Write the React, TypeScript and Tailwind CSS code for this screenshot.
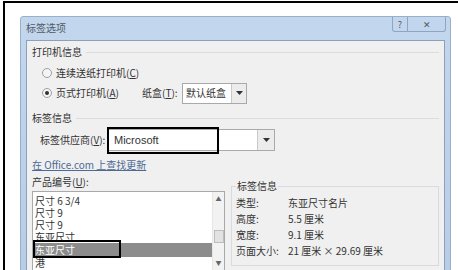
import React from "react";

const font = { fontFamily: '"Noto Sans CJK SC", "Liberation Sans", sans-serif' };

function Arrow() {
  return (
    <svg width="7" height="4" viewBox="0 0 7 4">
      <path d="M0 0h7L3.5 4z" fill="#333" />
    </svg>
  );
}

function Radio({ on }: { on?: boolean }) {
  return (
    <span className="w-[10px] h-[10px] rounded-full border border-[#a0a0a0] bg-[#f4f4f4] flex items-center justify-center">
      {on && <span className="w-[4px] h-[4px] rounded-full bg-[#333]" />}
    </span>
  );
}

function GroupHead({ children }: { children: React.ReactNode }) {
  return (
    <div className="flex items-center gap-1 h-[16px]">
      <span>{children}</span>
      <span className="flex-1 h-px bg-[#dcdcdc]" />
    </div>
  );
}

export default function App() {
  const items = ["尺寸 6 3/4", "尺寸 9", "尺寸 9", "东亚尺寸"];
  const info = [
    ["类型:", "东亚尺寸名片"],
    ["高度:", "5.5 厘米"],
    ["宽度:", "9.1 厘米"],
    ["页面大小:", "21 厘米 × 29.69 厘米"],
  ];
  return (
    <div className="w-[458px] h-[270px] overflow-hidden bg-white pt-[1px]" style={font}>
      <div className="ml-[3px] h-[280px] border-t-2 border-l-2 border-black pl-[15px] pt-[13px]">
        <div className="w-[431px] h-[270px] bg-gradient-to-b from-[#c2d7ee] to-[#b6cde6] border border-[#9aafc8] rounded-t-[3px] flex flex-col text-[10px] text-[#333] leading-none">
          <div className="h-[23px] flex items-start">
            <span className="ml-[5px] mt-[6px] text-[#505a66]">标签选项</span>
            <div className="ml-auto mr-[4px] flex">
              <div className="w-[16px] h-[15px] border border-t-0 border-[#8ea6c4] rounded-bl-[3px] flex items-center justify-center text-[9px] text-[#555]">?</div>
              <div className="w-[38px] h-[15px] border border-t-0 border-l-0 border-[#8ea6c4] rounded-br-[3px] flex items-center justify-center text-[9px] text-[#555]">✕</div>
            </div>
          </div>
          <div className="mx-[5px] flex-1 bg-[#f0f0f0] border border-[#8da0b8] px-[5px] pt-[3px] flex flex-col">
            <GroupHead>打印机信息</GroupHead>
            <div className="flex items-center gap-[4px] ml-[10px] mt-[5px] h-[16px]">
              <Radio />
              <span>连续送纸打印机(<u>C</u>)</span>
            </div>
            <div className="flex items-center ml-[10px] mt-[1px] h-[22px]">
              <Radio on />
              <span className="ml-[4px] w-[86px]">页式打印机(<u>A</u>)</span>
              <span className="w-[40px]">纸盒(<u>T</u>):</span>
              <div className="w-[65px] h-[21px] bg-white border border-[#a9a9a9] flex items-center">
                <span className="ml-[3px] flex-1">默认纸盒</span>
                <span className="w-[15px] h-full border-l border-[#c8c8c8] bg-[#ececec] flex items-center justify-center">
                  <Arrow />
                </span>
              </div>
            </div>
            <div className="mt-[6px]">
              <GroupHead>标签信息</GroupHead>
            </div>
            <div className="flex items-center ml-[8px] mt-[2px] h-[24px]">
              <span className="w-[68px]">标签供应商(<u>V</u>):</span>
              <div className="w-[167px] h-[22px] bg-white border border-[#a9a9a9] flex items-center relative">
                <span className="ml-[5px] flex-1 text-[11px]" style={{ fontFamily: '"Liberation Sans", sans-serif' }}>Microsoft</span>
                <span className="w-[17px] h-full border-l border-[#c8c8c8] bg-[#ececec] flex items-center justify-center">
                  <Arrow />
                </span>
                <div className="absolute left-[-2px] top-[-3px] w-[112px] h-[27px] border-2 border-black" />
              </div>
            </div>
            <div className="mt-[6px] h-[14px] flex items-center text-[#4d6a94] underline">在 Office.com 上查找更新</div>
            <div className="flex mt-[5px] gap-[6px]">
              <div className="flex flex-col">
                <div className="h-[14px]">产品编号(<u>U</u>):</div>
                <div className="w-[193px] h-[80px] bg-white border border-[#a9a9a9] flex overflow-hidden">
                  <div className="flex-1 flex flex-col pt-[3px] relative">
                    {items.map((t, i) => (
                      <div key={i} className="h-[12px] leading-[12px] pl-[2px]">{t}</div>
                    ))}
                    <div className="h-[14px] leading-[14px] pl-[2px] bg-[#8c8c8c] text-white">东亚尺寸</div>
                    <div className="h-[12px] leading-[12px] pl-[2px]">港</div>
                    <div className="absolute left-[0px] top-[48px] w-[88px] h-[18px] border-2 border-black" />
                  </div>
                  <div className="w-[12px] border-l border-[#e6e6e6] bg-[#f2f2f2] flex flex-col items-center">
                    <span className="h-[14px] text-[6px] text-[#666] flex items-center">▲</span>
                    <span className="mt-[24px] w-[10px] h-[13px] bg-[#e2e2e2] border border-[#bdbdbd]" />
                    <span className="mt-auto h-[14px] text-[6px] text-[#666] flex items-center">▼</span>
                  </div>
                </div>
              </div>
              <div className="relative mt-[9px] w-[209px] h-[80px] border border-[#d5dbe0] px-[4px] pt-[10px] flex flex-col gap-[5px]">
                <span className="absolute left-[4px] top-[-6px] bg-[#f0f0f0] px-[1px]">标签信息</span>
                {info.map(([k, v]) => (
                  <div key={k} className="flex h-[11px] items-center">
                    <span className="w-[52px]">{k}</span>
                    <span>{v}</span>
                  </div>
                ))}
              </div>
            </div>
          </div>
        </div>
      </div>
    </div>
  );
}
